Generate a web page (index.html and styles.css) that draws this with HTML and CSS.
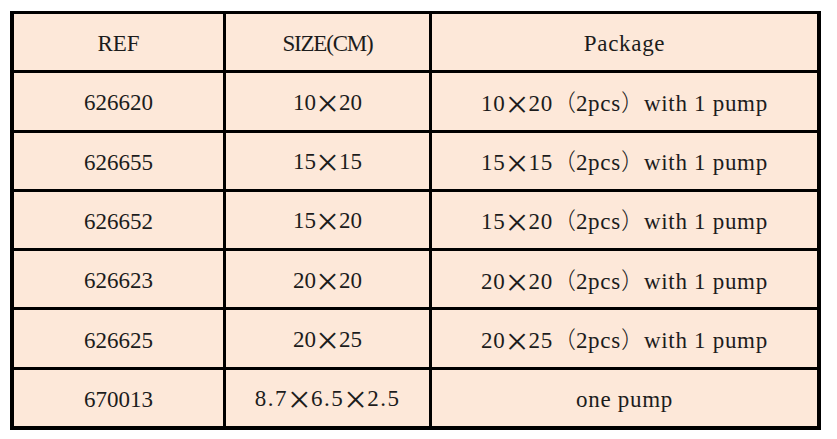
FILE: index.html
```html
<!DOCTYPE html>
<html>
<head>
<meta charset="utf-8">
<link rel="stylesheet" href="styles.css">
</head>
<body>
<div class="table">
  <div class="cell"><span class="t">REF</span></div>
  <div class="cell"><span class="t size-head">SIZE(CM)</span></div>
  <div class="cell"><span class="t pkg">Package</span></div>

  <div class="cell"><span class="t">626620</span></div>
  <div class="cell"><span class="t">10<span class="x">×</span>20</span></div>
  <div class="cell"><span class="t pkg">10<span class="x">×</span>20<span class="fw">（</span>2pcs<span class="fw">）</span>with 1 pump</span></div>

  <div class="cell"><span class="t">626655</span></div>
  <div class="cell"><span class="t">15<span class="x">×</span>15</span></div>
  <div class="cell"><span class="t pkg">15<span class="x">×</span>15<span class="fw">（</span>2pcs<span class="fw">）</span>with 1 pump</span></div>

  <div class="cell"><span class="t">626652</span></div>
  <div class="cell"><span class="t">15<span class="x">×</span>20</span></div>
  <div class="cell"><span class="t pkg">15<span class="x">×</span>20<span class="fw">（</span>2pcs<span class="fw">）</span>with 1 pump</span></div>

  <div class="cell"><span class="t">626623</span></div>
  <div class="cell"><span class="t">20<span class="x">×</span>20</span></div>
  <div class="cell"><span class="t pkg">20<span class="x">×</span>20<span class="fw">（</span>2pcs<span class="fw">）</span>with 1 pump</span></div>

  <div class="cell"><span class="t">626625</span></div>
  <div class="cell"><span class="t">20<span class="x">×</span>25</span></div>
  <div class="cell"><span class="t pkg">20<span class="x">×</span>25<span class="fw">（</span>2pcs<span class="fw">）</span>with 1 pump</span></div>

  <div class="cell"><span class="t">670013</span></div>
  <div class="cell"><span class="t dims">8.7<span class="x">×</span>6.5<span class="x">×</span>2.5</span></div>
  <div class="cell"><span class="t pkg">one pump</span></div>
</div>
</body>
</html>
```

FILE: styles.css
```css
html, body {
  margin: 0;
  padding: 0;
  background: #ffffff;
}

body {
  padding: 11px 0 0 10px;
  font-family: "Liberation Serif", "Times New Roman", serif;
  font-size: 23px;
  color: #1c1c1c;
}

.table {
  width: 811px;
  height: 419px;
  box-sizing: border-box;
  padding: 3px 4px 4px 4px;
  background: #000000;
  display: grid;
  grid-template-columns: 209px 203px 385px;
  grid-template-rows: repeat(7, 1fr);
  gap: 3px;
}

.cell {
  background: #fde8d9;
  display: flex;
  align-items: center;
  justify-content: center;
  padding-top: 3px;
}

.t {
  white-space: pre;
  line-height: 1;
}

.pkg {
  letter-spacing: 0.7px;
}

.size-head {
  letter-spacing: -1.2px;
}

.dims {
  letter-spacing: 1.5px;
}

.fw {
  font-family: "Noto Sans CJK SC", sans-serif;
  font-weight: 300;
  letter-spacing: 0;
}

.x {
  display: inline-block;
  width: 23px;
  text-align: center;
  font-size: 40px;
  font-weight: 300;
  line-height: 23px;
  letter-spacing: 0;
  vertical-align: -7px;
}
```
